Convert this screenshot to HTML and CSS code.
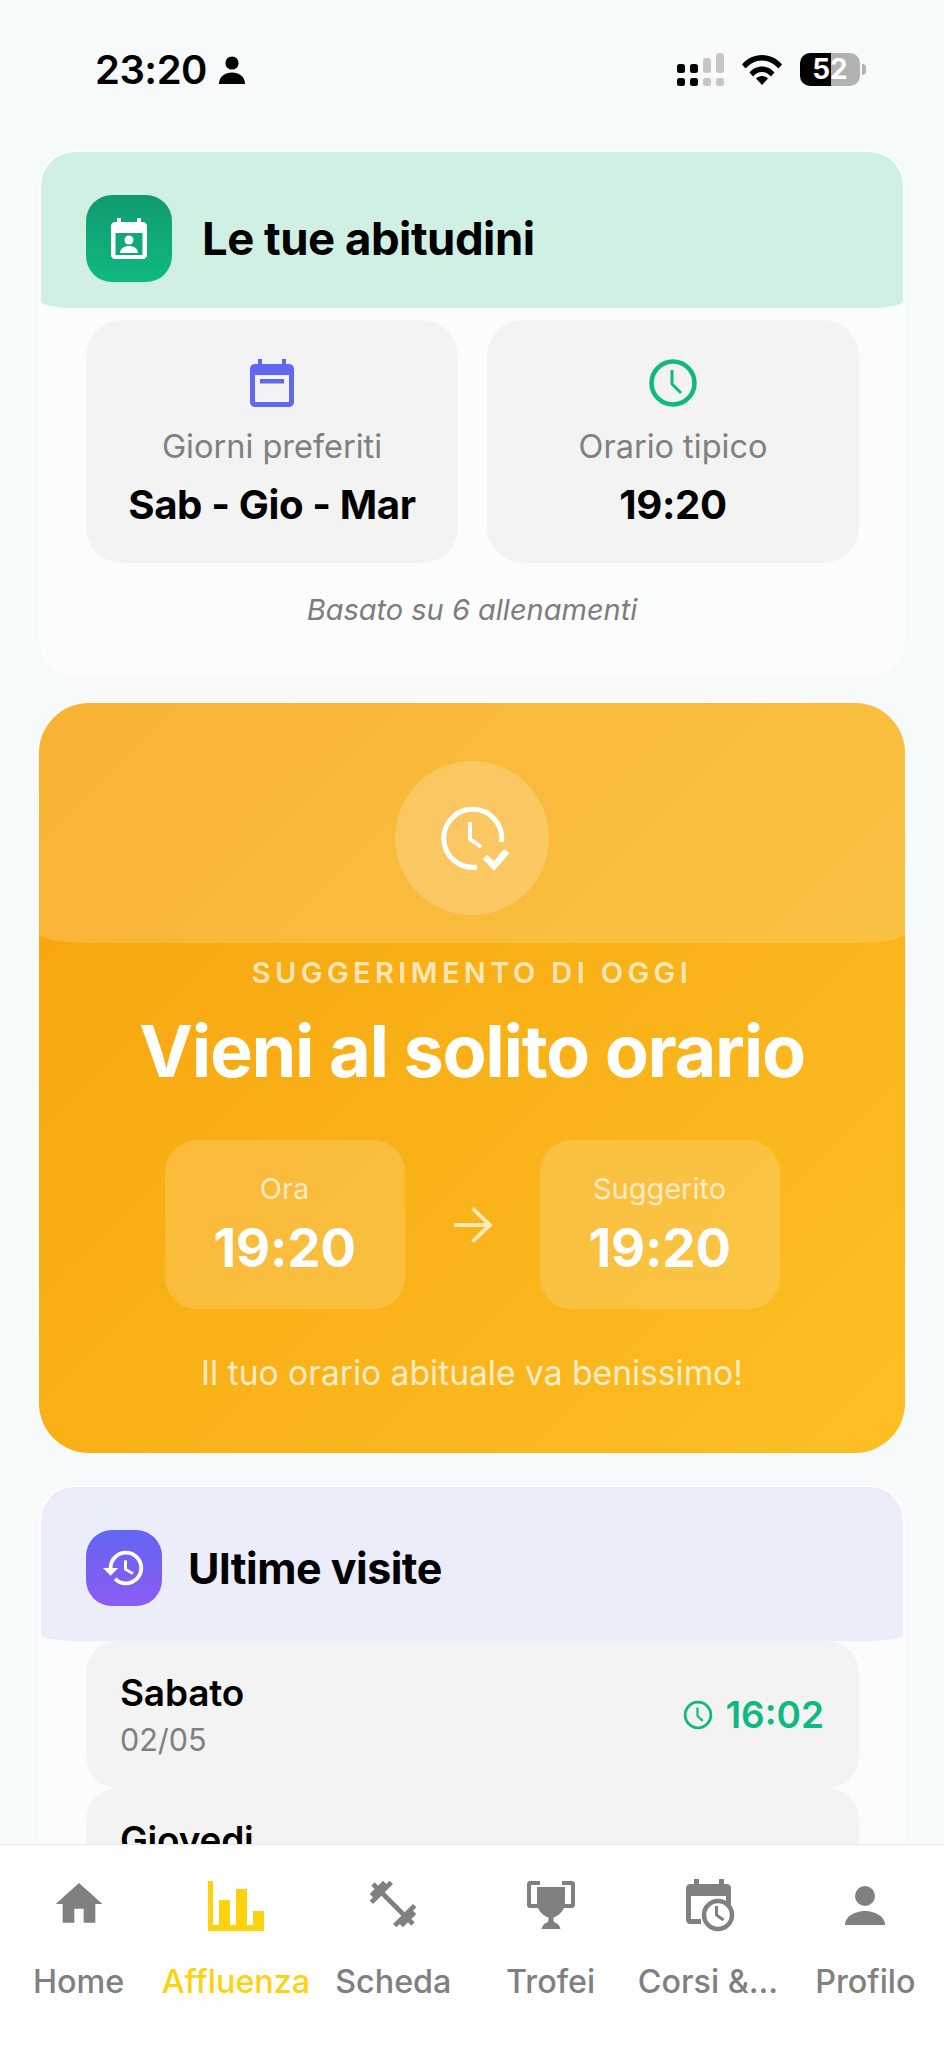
FILE: index.html
```html
<!DOCTYPE html>
<html lang="it">
<head>
<meta charset="utf-8">
<title>Affluenza</title>
<link rel="stylesheet" href="styles.css">
</head>
<body>
<div class="screen">
  <header class="status">
    <div class="status-left">
      <span class="clock-time">23:20</span>
      <svg class="status-person" viewBox="0 0 26 28"><circle cx="13" cy="7" r="6.6"/><path d="M0 28c0-7.5 6-11.5 13-11.5S26 20.500 26 28z"/></svg>
    </div>
    <div class="status-right">
      <svg class="signal" viewBox="0 0 47 34"><rect x="0" y="11" width="8" height="9" rx="2.500"/><rect x="13" y="11" width="8" height="9" rx="2.500"/><rect x="26" y="5" width="8" height="15" rx="3" class="dim"/><rect x="39" y="0" width="8" height="20" rx="3" class="dim"/><rect x="0" y="25" width="8" height="8" rx="2.500"/><rect x="13" y="25" width="8" height="8" rx="2.500"/><rect x="26" y="25" width="8" height="8" rx="2.500" class="dim"/><rect x="39" y="25" width="8" height="8" rx="2.500" class="dim"/></svg>
      <svg class="wifi" viewBox="0 0 40 30"><path d="M0 9.500C5 3.500 12 0 20 0s15 3.500 20 9.500l-3.600 4C32 8.500 26.500 5.500 20 5.500S8 8.500 3.600 13.500z"/><path d="M7.500 17.500C10.500 13.800 15 11.500 20 11.500s9.500 2.300 12.500 6l-3.600 4C26.700 19 23.500 17 20 17s-6.700 2-8.900 4.500z"/><path d="M20 30l-6-6.500c1.500-1.500 3.700-2.500 6-2.500s4.500 1 6 2.500z"/></svg>
      <div class="battery"><span class="battery-level">52</span><span class="battery-nub"></span></div>
    </div>
  </header>

  <main class="content">
    <section class="card">
      <div class="card-head head-green">
        <div class="head-icon icon-green">
          <svg viewBox="0 0 36 41" class="head-svg"><path fill="#fff" d="M6 0h4v4h16V0h4v4h2c2.200 0 4 1.800 4 4v29c0 2.200-1.800 4-4 4H4c-2.200 0-4-1.800-4-4V8c0-2.200 1.800-4 4-4h2z"/><rect x="4.500" y="15" width="27" height="22" fill="#12a87a"/><circle cx="18" cy="22" r="4.500" fill="#fff"/><path fill="#fff" d="M9 35c0-4.500 4.500-7 9-7s9 2.500 9 7z"/></svg>
        </div>
        <h2 class="title title-lg">Le tue abitudini</h2>
      </div>
      <div class="stats">
        <div class="stat">
          <svg class="stat-icon" viewBox="0 0 56 56"><path fill="#6366f1" d="M14 4h4v5h20V4h4v5h3c2.800 0 5 2.200 5 5v33c0 2.800-2.200 5-5 5H11c-2.800 0-5-2.200-5-5V14c0-2.800 2.200-5 5-5h3z"/><rect x="11" y="20" width="34" height="27" fill="#f3f3f3"/><rect x="16" y="24" width="24" height="4.500" fill="#6366f1"/></svg>
          <div class="stat-label">Giorni preferiti</div>
          <div class="stat-value">Sab - Gio - Mar</div>
        </div>
        <div class="stat">
          <svg class="stat-icon" viewBox="0 0 56 56"><circle cx="28" cy="28" r="21.500" fill="none" stroke="#10b981" stroke-width="4.500"/><path d="M27 15v14l9 9" fill="none" stroke="#10b981" stroke-width="3"/></svg>
          <div class="stat-label">Orario tipico</div>
          <div class="stat-value">19:20</div>
        </div>
      </div>
      <p class="based">Basato su 6 allenamenti</p>
    </section>

    <section class="tip">
      <div class="tip-head">
        <div class="tip-circle">
          <svg class="tip-icon" viewBox="0 0 70 66"><path d="M37 62A29 29 0 1 1 61.500 37" fill="none" stroke="#fff" stroke-width="5"/><path d="M30 17v17l11 8" fill="none" stroke="#fff" stroke-width="4"/><path d="M45 52l9 9 13-15" fill="none" stroke="#fff" stroke-width="6.500"/></svg>
        </div>
      </div>
      <div class="tip-label">SUGGERIMENTO DI OGGI</div>
      <h2 class="tip-title">Vieni al solito orario</h2>
      <div class="tip-times">
        <div class="time-box">
          <div class="time-label">Ora</div>
          <div class="time-value">19:20</div>
        </div>
        <svg class="arrow" viewBox="0 0 40 38"><path d="M1 19h36M20 2l18 17-18 17" fill="none" stroke="#fff" stroke-opacity=".7" stroke-width="4"/></svg>
        <div class="time-box">
          <div class="time-label">Suggerito</div>
          <div class="time-value">19:20</div>
        </div>
      </div>
      <p class="tip-foot">Il tuo orario abituale va benissimo!</p>
    </section>

    <section class="card card-cut">
      <div class="card-head head-purple">
        <div class="head-icon icon-purple">
          <svg viewBox="0 0 24 24" class="history-svg"><path fill="#fff" d="M13 3c-4.970 0-9 4.030-9 9H1l3.890 3.890.07.140L9 12H6c0-3.870 3.130-7 7-7s7 3.130 7 7-3.130 7-7 7c-1.930 0-3.680-.790-4.940-2.060l-1.420 1.420C8.270 19.990 10.510 21 13 21c4.970 0 9-4.030 9-9s-4.030-9-9-9zm-1 5v5l4.280 2.540.720-1.210-3.500-2.080V8H12z"/></svg>
        </div>
        <h2 class="title title-md">Ultime visite</h2>
      </div>
      <div class="visits">
        <div class="visit">
          <div class="visit-text">
            <div class="visit-day">Sabato</div>
            <div class="visit-date">02/05</div>
          </div>
          <div class="visit-time">
            <svg class="visit-clock" viewBox="0 0 28 28"><circle cx="14" cy="14" r="12" fill="none" stroke="#10b981" stroke-width="2.600"/><path d="M13.500 7v8l5 4.500" fill="none" stroke="#10b981" stroke-width="2"/></svg>
            <span>16:02</span>
          </div>
        </div>
        <div class="visit">
          <div class="visit-text">
            <div class="visit-day">Giovedi</div>
            <div class="visit-date">30/04</div>
          </div>
        </div>
      </div>
    </section>
  </main>

  <nav class="tabs">
    <div class="tab">
      <svg class="tab-icon" viewBox="0 0 24 24"><path d="M10 20v-6h4v6h5v-8h3L12 3 2 12h3v8z"/></svg>
      <span>Home</span>
    </div>
    <div class="tab tab-active">
      <svg class="tab-icon" viewBox="0 0 56 56"><rect x="0" y="5" width="5" height="50"/><rect x="0" y="49" width="56" height="6"/><rect x="11" y="24" width="11" height="26"/><rect x="28" y="13" width="11" height="37"/><rect x="45" y="35" width="11" height="15"/></svg>
      <span>Affluenza</span>
    </div>
    <div class="tab">
      <svg class="tab-icon" viewBox="0 0 24 24"><path d="M20.570 14.860L22 13.430 20.570 12 17 15.570 8.430 7 12 3.430 10.570 2 9.140 3.430 7.710 2 5.570 4.140 4.140 2.710 2.710 4.140l1.430 1.430L2 7.710l1.430 1.430L2 10.570 3.430 12 7 8.430 15.570 17 12 20.570 13.430 22l1.430-1.430L16.290 22l2.140-2.140 1.430 1.430 1.430-1.430-1.430-1.430L22 16.290z"/></svg>
      <span>Scheda</span>
    </div>
    <div class="tab">
      <svg class="tab-icon" viewBox="0 0 56 56"><path d="M7 5h10v4H9c-.6 0-1 .4-1 1v17c0 .6.400 1 1 1h6v4H7c-2 0-3-1.500-3-3V8c0-1.500 1-3 3-3zM39 5h10c2 0 3 1.500 3 3v21c0 1.500-1 3-3 3h-8v-4h6c.6 0 1-.4 1-1V10c0-.6-.4-1-1-1h-8z"/><path d="M14 11h28v16c0 7-6 13-11.500 14.500V44c0 1.500 1 2.500 2.500 3 2 .7 4 3 4.500 6h-19c.5-3 2.500-5.300 4.500-6 1.500-.5 2.500-1.500 2.500-3v-2.500C20 40 14 34 14 27z"/></svg>
      <span>Trofei</span>
    </div>
    <div class="tab">
      <svg class="tab-icon" viewBox="0 0 56 56"><path d="M14 3h5v5h20V3h5v5h3c2 0 4 1.800 4 4v17h-5v-9H11v23h10v5H10c-2.200 0-4-1.800-4-4V12c0-2.200 1.800-4 4-4h4z"/><circle cx="38" cy="39" r="14" fill="#fff" stroke="#808080" stroke-width="4.500"/><path d="M36.500 30v9l7 5" fill="none" stroke="#808080" stroke-width="3"/></svg>
      <span>Corsi &amp;...</span>
    </div>
    <div class="tab">
      <svg class="tab-icon" viewBox="0 0 56 56"><circle cx="28" cy="20" r="10"/><path d="M8 49c0-9 11-14 20-14s20 5 20 14z"/></svg>
      <span>Profilo</span>
    </div>
  </nav>
</div>
</body>
</html>
```

FILE: styles.css
```css
* { box-sizing: border-box; }
html, body { margin: 0; padding: 0; }
body { font-family: Inter, "Noto Sans", sans-serif; background: #f6fafb; color: #000; }

.screen { width: 944px; height: 2048px; display: flex; flex-direction: column; overflow: hidden; background: #f6fafb; }

.status { flex: none; height: 150px; display: flex; justify-content: space-between; align-items: flex-start; padding: 50px 84px 0 95px; }
.status-left { display: flex; align-items: center; gap: 12px; height: 40px; }
.clock-time { font-size: 40px; font-weight: 600; line-height: 40px; letter-spacing: -0.5px; }
.status-person { width: 26px; height: 28px; }
.status-right { display: flex; align-items: flex-start; margin-top: 3px; }
.signal { width: 47px; height: 34px; }
.signal .dim { fill: #c4c6c7; }
.wifi { width: 40px; height: 30px; margin: 2px 18px 0 18px; }
.battery { position: relative; width: 60px; height: 33px; border-radius: 10px; background: linear-gradient(90deg, #000 52%, #b2b2b2 52%); color: #fff; font-size: 28px; font-weight: 700; line-height: 33px; text-align: center; }
.battery-nub { position: absolute; left: 62px; top: 11px; width: 4px; height: 11px; border-radius: 0 4px 4px 0; background: #b2b2b2; }

.content { flex: 1; min-height: 0; overflow: hidden; display: flex; flex-direction: column; padding: 0 39px; }

.card { flex: none; border-radius: 36px; background: #fbfcfc; border: 2px solid #fcfdfd; }
.card + .tip { margin-top: 28px; }
.tip + .card { margin-top: 32px; }
.card-cut { height: 600px; }

.card-head { display: flex; align-items: center; padding-left: 45px; border-radius: 34px 34px 34px 34px / 34px 34px 7px 7px; position: relative; z-index: 1; }
.head-green { height: 156px; padding-top: 17px; background: #cff0e3; gap: 30px; }
.head-purple { height: 154px; padding-top: 8px; background: #ecedfa; gap: 26px; }
.head-icon { flex: none; display: flex; align-items: center; justify-content: center; border-radius: 26px; }
.icon-green { width: 86px; height: 87px; background: linear-gradient(180deg, #0f9a70, #10b981); }
.icon-purple { width: 76px; height: 76px; background: linear-gradient(180deg, #6366f1, #8b5cf6); }
.head-svg { width: 36px; height: 41px; }
.history-svg { width: 46px; height: 46px; }
.title { margin: 0; font-weight: 700; letter-spacing: -0.5px; }
.title-lg { font-size: 45.500px; }
.title-md { font-size: 43px; }

.stats { display: flex; gap: 29px; padding: 12px 44px 0 45px; }
.stat { flex: 1; height: 243px; border-radius: 36px; background: #f3f3f3; display: flex; flex-direction: column; align-items: center; padding-top: 35px; }
.stat-icon { width: 56px; height: 56px; }
.stat-label { margin-top: 16px; font-size: 32.500px; line-height: 40px; color: #808080; }
.stat-value { margin-top: 18px; font-size: 40.200px; line-height: 40px; font-weight: 700; letter-spacing: -0.4px; }
.based { margin: 29px 0 0; padding-bottom: 45px; text-align: center; font-size: 29px; line-height: 36px; font-style: italic; color: #7d7d7d; }

.tip { flex: none; height: 750px; border-radius: 50px; background: linear-gradient(135deg, #f7a30c, #fcbf24); color: #fff; display: flex; flex-direction: column; align-items: center; }
.tip-head { width: 100%; height: 240px; flex: none; display: flex; justify-content: center; padding-top: 58px; background: rgba(255, 255, 255, 0.17); border-radius: 50px 50px 50px 50px / 50px 50px 10px 10px; }
.tip-circle { width: 154px; height: 154px; border-radius: 50%; background: rgba(255, 255, 255, 0.2); display: flex; align-items: center; justify-content: center; }
.tip-icon { width: 70px; height: 66px; margin-left: 6px; }
.tip-label { margin-top: 12px; font-size: 29px; line-height: 36px; font-weight: 600; letter-spacing: 4.400px; color: rgba(255, 255, 255, 0.7); }
.tip-title { margin: 19px 0 0; font-size: 72px; line-height: 82px; font-weight: 700; letter-spacing: -1.300px; }
.tip-times { display: flex; align-items: center; gap: 48px; margin-top: 48px; }
.time-box { width: 240px; height: 169px; border-radius: 32px; background: rgba(255, 255, 255, 0.16); display: flex; flex-direction: column; align-items: center; padding-top: 31px; }
.time-label { font-size: 29px; line-height: 36px; color: rgba(255, 255, 255, 0.7); }
.time-value { margin-top: 9px; font-size: 53px; line-height: 64px; font-weight: 700; letter-spacing: -0.3px; }
.arrow { width: 39px; height: 38px; }
.tip-foot { margin: 44px 0 0; font-size: 33.600px; line-height: 40px; color: rgba(255, 255, 255, 0.75); }

.visits { padding: 0 44px 0 45px; display: flex; flex-direction: column; }
.visit { flex: none; height: 147px; border-radius: 32px; background: #f3f3f3; display: flex; justify-content: space-between; align-items: center; padding: 0 35px 0 34px; }
.visit-day { font-size: 37px; line-height: 44px; font-weight: 600; letter-spacing: -0.2px; }
.visit-date { margin-top: 6px; font-size: 30.500px; line-height: 38px; color: #808080; }
.visit-time { display: flex; align-items: center; gap: 12px; font-size: 37px; font-weight: 600; color: #10b981; }
.visit-clock { width: 30px; height: 30px; }

.tabs { flex: none; height: 204px; display: grid; grid-template-columns: repeat(6, 1fr); padding-top: 31px; background: #fff; border-top: 1px solid #e8e8e8; position: relative; z-index: 2; }
.tab { display: flex; flex-direction: column; align-items: center; font-size: 32.300px; line-height: 40px; font-weight: 500; color: #808080; white-space: nowrap; }
.tab-icon { width: 56px; height: 56px; fill: #808080; margin-bottom: 30px; flex: none; }
.tab-active { color: #fdd20f; }
.tab-active .tab-icon { fill: #fdd20f; }
```
